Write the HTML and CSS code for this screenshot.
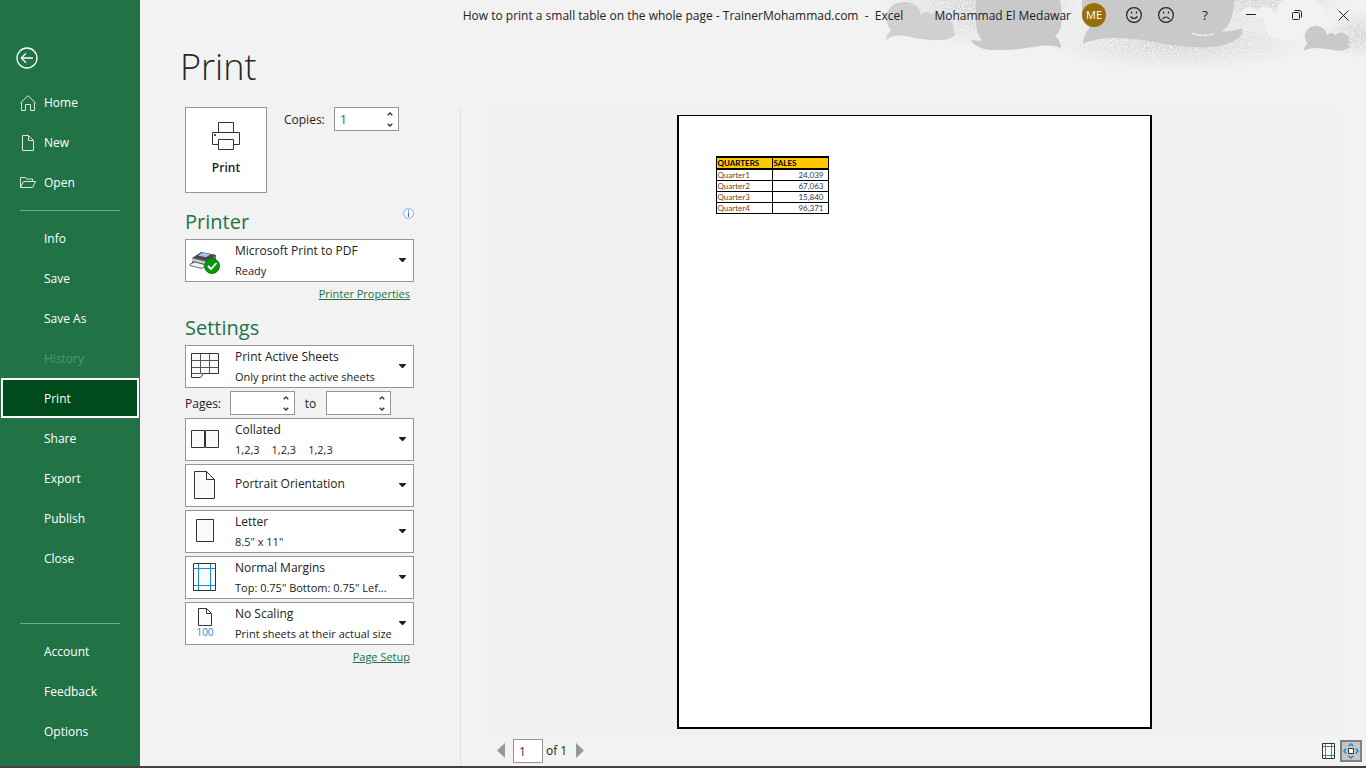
FILE: index.html
```html
<!DOCTYPE html>
<html lang="en">
<head>
<meta charset="utf-8">
<title>Print - Excel</title>
<link rel="stylesheet" href="styles.css">
</head>
<body>
<svg class="symbols" aria-hidden="true">
  <symbol id="caret" viewBox="0 0 7 4"><path d="M0 0h7v.8L4 4H3L0 .8z" fill="#222"/></symbol>
  <symbol id="up" viewBox="0 0 6 4"><path d="M.7 3.300 3 1l2.300 2.300" fill="none" stroke="#333" stroke-width="1.300"/></symbol>
  <symbol id="down" viewBox="0 0 6 4"><path d="M.7 .7 3 3 5.300 .7" fill="none" stroke="#333" stroke-width="1.300"/></symbol>
</svg>

<div class="app">
  <nav class="sidebar" aria-label="File">
    <button class="back" aria-label="Back">
      <svg width="22" height="22" viewBox="0 0 22 22" fill="none" stroke="#fff" stroke-width="1.300"><circle cx="11" cy="11" r="10"/><path d="M17 11H5.500M10 6.300 5.300 11 10 15.700"/></svg>
    </button>
    <a class="nav-item" href="#home"><svg width="16" height="16" viewBox="0 0 16 16" fill="none" stroke="#dce9e1"><path d="M.5 8 8 .7 15.500 8M1.500 7.500v8h4v-6h5v6h4v-8"/></svg>Home</a>
    <a class="nav-item" href="#new"><svg width="16" height="16" viewBox="0 0 16 16" fill="none" stroke="#dce9e1"><path d="M2.500.5h6l5 5v10h-11zM8.500.5v5h5"/></svg>New</a>
    <a class="nav-item" href="#open"><svg width="16" height="16" viewBox="0 0 16 16" fill="none" stroke="#dce9e1"><path d="M.5 12.500v-10h5l1 1.500h6v2.500M.5 12.500l3-6h12l-3 6z"/></svg>Open</a>
    <hr class="rule">
    <a class="nav-item" href="#info">Info</a>
    <a class="nav-item" href="#save">Save</a>
    <a class="nav-item" href="#saveas">Save As</a>
    <a class="nav-item disabled" aria-disabled="true">History</a>
    <a class="nav-item current" href="#print" aria-current="page">Print</a>
    <a class="nav-item" href="#share">Share</a>
    <a class="nav-item" href="#export">Export</a>
    <a class="nav-item" href="#publish">Publish</a>
    <a class="nav-item" href="#close">Close</a>
    <hr class="rule lower">
    <a class="nav-item" href="#account">Account</a>
    <a class="nav-item" href="#feedback">Feedback</a>
    <a class="nav-item" href="#options">Options</a>
  </nav>

  <section class="settings">
    <h1>Print</h1>
    <div class="print-row">
      <button class="print-button">
        <svg width="28" height="28" viewBox="0 0 28 28" fill="#fafafa" stroke="#333"><path d="M6.500 10.500v-10h15v10M6.500 22.500h-6v-12h27v12h-6"/><path d="M6.500 17.500h15v10h-15z"/><path d="M2.500 12.500h1v1h-1z" fill="#333"/></svg>
        Print
      </button>
      <label for="copies">Copies:</label>
      <div class="spin"><input id="copies" type="number" value="1"><span class="steps"><button aria-label="More copies"><svg><use href="#up"/></svg></button><button aria-label="Fewer copies"><svg><use href="#down"/></svg></button></span></div>
    </div>

    <div class="heading"><h2>Printer</h2>
      <button class="info" aria-label="Printer status"><svg width="11" height="11" viewBox="0 0 11 11"><circle cx="5.500" cy="5.500" r="5" fill="#f5f9ff" stroke="#87aede"/><path d="M5.500 2v1.500M5.500 4.500V9" stroke="#3c6eb4"/></svg></button>
    </div>
    <div class="choice">
      <select aria-label="Printer"><option>Microsoft Print to PDF</option></select>
      <span class="picture"><svg width="32" height="28" viewBox="0 0 32 28"><path d="m3 12 9-5.500 15 2.500v8l-9 5-15-4z" fill="#6b6d70"/><path d="m4 11.500 8.500-5.500L27 9l-8 6z" fill="#48494c"/><path d="m9 9.500 4.500-2.800 8 1.500-4.500 3z" fill="#a7c6ea"/><path d="m3 12.500 15 3.500v2.500L3 15z" fill="#c9cbce"/><path d="m1 18 5-2 11 3-4 3.500L1 19.500z" fill="#f2f2f2" stroke="#4a4a4a" stroke-width=".8"/><circle cx="23" cy="20" r="7.500" fill="#0a970e" stroke="#087a0b"/><path d="m19 20 3 3 5.500-6" fill="none" stroke="#fff" stroke-width="1.800"/></svg></span>
      <span class="detail">Ready</span><svg class="caret"><use href="#caret"/></svg>
    </div>
    <a class="link" href="#properties">Printer Properties</a>

    <div class="heading"><h2>Settings</h2></div>
    <div class="stack">
      <div class="choice">
        <select aria-label="What to print"><option>Print Active Sheets</option></select>
        <span class="picture"><svg width="28" height="26" viewBox="0 0 28 26"><path d="M.5.500h27v20h-15l-3 4h-9z" fill="#fafafa" stroke="#333"/><path d="M9.500.500v20M18.500.500v20M.5 7.500h27M.5 14.500h27M.5 20.500h12" fill="none" stroke="#555"/></svg></span>
        <span class="detail">Only print the active sheets</span><svg class="caret"><use href="#caret"/></svg>
      </div>
      <div class="pages">
        <label for="from">Pages:</label>
        <div class="spin"><input id="from" type="number"><span class="steps"><button aria-label="Raise first page"><svg><use href="#up"/></svg></button><button aria-label="Lower first page"><svg><use href="#down"/></svg></button></span></div>
        <label for="to">to</label>
        <div class="spin"><input id="to" type="number"><span class="steps"><button aria-label="Raise last page"><svg><use href="#up"/></svg></button><button aria-label="Lower last page"><svg><use href="#down"/></svg></button></span></div>
      </div>
      <div class="choice">
        <select aria-label="Collation"><option>Collated</option></select>
        <span class="picture"><svg width="28" height="18" viewBox="0 0 28 18" fill="#fafafa" stroke="#333"><path d="M.5.500h13v17H.5zM14.500.500h13v17h-13z"/></svg></span>
        <span class="detail groups"><span>1,2,3</span><span>1,2,3</span><span>1,2,3</span></span><svg class="caret"><use href="#caret"/></svg>
      </div>
      <div class="choice single">
        <select aria-label="Orientation"><option>Portrait Orientation</option></select>
        <span class="picture"><svg width="22" height="28" viewBox="0 0 22 28" fill="#fafafa" stroke="#333"><path d="M.5.500h12l8 8v19H.5zM12.500.500v8h8"/></svg></span>
        <svg class="caret"><use href="#caret"/></svg>
      </div>
      <div class="choice">
        <select aria-label="Paper size"><option>Letter</option></select>
        <span class="picture"><svg width="18" height="24" viewBox="0 0 18 24"><path d="M.5.500h17v22H.5z" fill="#fafafa" stroke="#333"/></svg></span>
        <span class="detail">8.5" x 11"</span><svg class="caret"><use href="#caret"/></svg>
      </div>
      <div class="choice">
        <select aria-label="Margins"><option>Normal Margins</option></select>
        <span class="picture"><svg width="24" height="28" viewBox="0 0 24 28"><path d="M.5.500h22v27H.5z" fill="#fafafa"/><path d="M5.500 1v26M17.500 1v26M1 5.500h21M1 22.500h21" stroke="#1e8bcd"/><path d="M.5.500h22v27H.5z" fill="none" stroke="#333"/></svg></span>
        <span class="detail">Top: 0.75" Bottom: 0.75" Lef...</span><svg class="caret"><use href="#caret"/></svg>
      </div>
      <div class="choice">
        <select aria-label="Scaling"><option>No Scaling</option></select>
        <span class="picture scaling"><svg width="14" height="18" viewBox="0 0 14 18" fill="#fafafa" stroke="#333"><path d="M.5.500h8l5 5v12H.5zM8.500.500v5h5"/></svg><span>100</span></span>
        <span class="detail">Print sheets at their actual size</span><svg class="caret"><use href="#caret"/></svg>
      </div>
    </div>
    <a class="link" href="#setup">Page Setup</a>
  </section>

  <main class="preview">
    <div class="desk">
      <div class="sheet">
        <table>
          <thead><tr><th>QUARTERS</th><th>SALES</th></tr></thead>
          <tbody>
            <tr><td>Quarter1</td><td>24,039</td></tr>
            <tr><td>Quarter2</td><td>67,063</td></tr>
            <tr><td>Quarter3</td><td>15,840</td></tr>
            <tr><td>Quarter4</td><td>96,371</td></tr>
          </tbody>
        </table>
      </div>
    </div>
    <div class="pager">
      <button aria-label="Previous page"><svg width="8" height="15" viewBox="0 0 8 15"><path d="M8 0v15L0 7.500z" fill="#969696"/></svg></button>
      <input id="page" type="text" value="1" aria-label="Current page"><label for="page">of 1</label>
      <button aria-label="Next page"><svg width="8" height="15" viewBox="0 0 8 15"><path d="M0 0v15l8-7.500z" fill="#969696"/></svg></button>
      <button class="view first" aria-label="Show margins"><svg width="14" height="16" viewBox="0 0 14 16"><path d="M.5.500h12v15H.5z" fill="#fff"/><path d="M3.500 1v14M9.500 1v14M1 3.500h11M1 12.500h11" stroke="#1e8bcd"/><path d="M.5.500h12v15H.5z" fill="none" stroke="#333"/></svg></button>
      <button class="view pressed" aria-label="Zoom to page" aria-pressed="true"><svg width="16" height="16" viewBox="0 0 16 16" fill="none"><path d="M5.500 3.200 8 1l2.500 2.200M5.500 12.800 8 15l2.500-2.200M3.200 5.500 1 8l2.200 2.500M12.800 5.500 15 8l-2.200 2.500" stroke="#1e8bcd" stroke-width="1.500"/><path d="M5.500 5.500h5v5h-5z" fill="#fff" stroke="#333"/></svg></button>
    </div>
  </main>

  <header class="titlebar">
    <svg class="clouds" viewBox="0 0 1518 240" aria-hidden="true">
      <defs>
        <filter id="grain" x="0" y="0" width="1" height="1" color-interpolation-filters="sRGB"><feTurbulence type="fractalNoise" baseFrequency=".3" numOctaves="2" seed="4"/><feColorMatrix values="0 0 0 0 .79  0 0 0 0 .79  0 0 0 0 .79  4 0 0 0 -1.400"/><feComposite operator="in" in2="SourceGraphic"/></filter>
        <radialGradient id="haze"><stop offset="0" stop-color="#000" stop-opacity=".9"/><stop offset=".5" stop-color="#000" stop-opacity=".5"/><stop offset="1" stop-color="#000" stop-opacity="0"/></radialGradient>
      </defs>
      <g filter="url(#grain)">
        <path d="M0 0h1518v212H0z" fill="none"/>
        <ellipse cx="390" cy="20" rx="330" ry="120" fill="url(#haze)"/>
        <ellipse cx="960" cy="125" rx="400" ry="86" fill="url(#haze)"/>
        <ellipse cx="1200" cy="0" rx="270" ry="90" fill="url(#haze)"/>
        <ellipse cx="1500" cy="105" rx="110" ry="72" fill="url(#haze)"/>
      </g>
      <path d="M1140 40q20-30 50-10 25-20 50 0l8 15q0-30 25-45h95q30 25 25 75-45 40-120 45-60-5-60-65l-40-5z" fill="#f2f2f2"/>
      <path d="M78 120q2-18 16-30-14-10-14-38 4-45 52-47 48 4 50 38 18-14 33 0 20-12 45 10 28 15 20 47l10-3q-10 23-60 24-53-2-90-12-36-8-62 11z" fill="#d0d0d0"/>
      <path d="M348 0h252q8 45 3 80-3 16-18 27 18 14 18 39-24-16-88-4-60 10-125 8-50-7-58-33 10 8 34 4-18-20-18-58z" fill="#c9c9c9"/>
      <path d="M666 0h456q0 70-37 94 35 2 60-10 8 15-10 31-40 29-120 27-80-4-130-16-150-26-217 5 4-32 22-48-24-14-24-45z" fill="#c9c9c9"/>
      <path d="M996 100q34 12 68 0" fill="none" stroke="#efefef" stroke-width="5" stroke-dasharray="14 3"/>
      <path d="M1332 153q1-15 11-23-11-14-8-29 8-23 32-24 29 2 35 29 12-14 24 0 6-8 16-8 27 3 26 26l-4 14 10-1q-12 15-43 15-45-8-64-8-22 0-35 9z" fill="#c9c9c9"/>
    </svg>
    <div class="title">How to print a small table on the whole page - TrainerMohammad.com&nbsp; -&nbsp; Excel</div>
    <div class="account">
      <span class="user">Mohammad El Medawar</span><span class="avatar">ME</span>
      <button class="face" aria-label="Send a smile"><svg width="16" height="16" viewBox="0 0 16 16" fill="none" stroke="#222" stroke-width="1.200"><circle cx="8" cy="8" r="7.400"/><path d="M4.500 9.500q3.500 4 7 0M5.500 4.500v2M10.500 4.500v2"/></svg></button>
      <button class="face" aria-label="Send a frown"><svg width="16" height="16" viewBox="0 0 16 16" fill="none" stroke="#222" stroke-width="1.200"><circle cx="8" cy="8" r="7.400"/><path d="M4.500 12q3.500-4 7 0M5.500 4.500v2M10.500 4.500v2"/></svg></button>
      <button class="face help" aria-label="Help">?</button>
      <button class="window" aria-label="Minimize"><svg width="10" height="10" viewBox="0 0 10 10"><path d="M0 4.500h10" stroke="#222"/></svg></button>
      <button class="window" aria-label="Restore"><svg width="10" height="10" viewBox="0 0 10 10" fill="none" stroke="#222"><rect x=".5" y="2.500" width="7" height="7" rx="1"/><path d="M2.500.500h5q2 0 2 2v5"/></svg></button>
      <button class="window" aria-label="Close"><svg width="11" height="11" viewBox="0 0 11 11"><path d="m.5.500 10 10m0-10-10 10" stroke="#222"/></svg></button>
    </div>
  </header>
</div>
</body>
</html>
```
FILE: styles.css
```css
* { box-sizing: border-box; }
body { margin: 0; font: 12px/20px "Open Sans", "Noto Sans", sans-serif; color: #222; background: #f2f2f2; }
button, input, select { font: inherit; color: inherit; margin: 0; }
button { padding: 0; border: 0; background: none; display: flex; align-items: center; justify-content: center; }
h1, h2 { margin: 0; font-weight: 300; }
svg { display: block; flex: none; }
.symbols { position: absolute; width: 0; height: 0; }

.app {
  min-height: 100vh;
  display: grid;
  grid-template: 30px 1fr / 140px 320px 1fr;
  border-bottom: 2px solid #444142;
}

.titlebar {
  grid-area: 1 / 1 / 2 / 4;
  display: grid;
  grid-template-columns: 1fr auto 1fr;
  align-items: center;
  position: relative;
}
.clouds { position: absolute; top: 0; right: 0; width: 506px; height: 80px; }
.title, .account { position: relative; white-space: nowrap; }
.title { grid-column: 2; padding-top: 2px; }
.account { grid-column: 3; display: flex; align-items: center; justify-content: flex-end; }
.user { padding-top: 2px; }
.avatar { width: 24px; height: 24px; border-radius: 50%; background: #986f0b; color: #fff; line-height: 24px; text-align: center; margin: 0 12px 0 11px; font-size: 11px; }
.face { width: 32px; height: 30px; }
.help { margin: 0 7px; font-size: 13px; }
.window { width: 46px; height: 30px; }

.sidebar { grid-area: 1 / 1 / 3 / 2; background: #217346; display: flex; flex-direction: column; padding: 42px 0 15px; }
.back { width: 32px; height: 32px; margin: 0 0 8px 11px; }
.nav-item { height: 40px; flex: none; display: flex; align-items: center; gap: 8px; padding: 1px 0 0 44px; color: #fff; text-decoration: none; }
.nav-item:has(svg) { padding-left: 20px; }
.disabled { color: #4f9770; }
.current { margin: 0 1px; padding-left: 41px; border: 2px solid #fff; background: #004b1c; }
.rule { width: 100px; height: 1px; flex: none; border: 0; background: #6fb08b; margin: 8px 20px 7px; }
.lower { margin-top: auto; }

.settings { grid-area: 2 / 2; padding: 0 46px 0 45px; }
h1 { font-size: 36px; line-height: 74px; margin: 0 0 3px -5px; color: #262626; }
h2 { font-size: 20px; line-height: 28px; font-weight: 400; color: #217346; }
.print-row { display: flex; align-items: flex-start; height: 86px; line-height: 26px; }
.print-button { width: 82px; height: 86px; margin-right: 17px; border: 1px solid #969696; background: #fff; flex-direction: column; gap: 8px; font-weight: 600; line-height: 20px; }
.print-row label { width: 50px; }
.spin { width: 65px; height: 24px; display: flex; border: 1px solid #969696; background: #fff; }
.spin input { width: 47px; border: 0; background: none; padding: 1px 5px 0; outline: 0; appearance: textfield; color: #217346; }
.spin input::-webkit-inner-spin-button { appearance: none; margin: 0; }
.steps { width: 16px; display: flex; flex-direction: column; }
.steps button { flex: 1; }
.steps svg { width: 6px; height: 4px; }
.heading { display: flex; justify-content: space-between; padding: 15px 0 3px; }
.info { width: 11px; height: 11px; }

.stack { display: grid; gap: 3px; }
.choice { display: grid; grid-template: 22px 19px / 49px 1fr 20px; border: 1px solid #969696; background: #fff; }
.choice select { grid-area: 1 / 1 / 3 / 4; appearance: none; min-width: 0; border: 0; background: none; padding: 1px 20px 20px 49px; line-height: 20px; outline: 0; }
.picture, .detail, .caret { pointer-events: none; }
.picture { grid-area: 1 / 1 / 3 / 2; width: 38px; padding-bottom: 1px; display: flex; flex-direction: column; align-items: center; justify-content: center; }
.detail { grid-area: 2 / 2 / 3 / 4; font-size: 11px; line-height: 18px; white-space: nowrap; }
.groups { display: flex; gap: 12px; }
.caret { grid-area: 1 / 3 / 3 / 4; width: 7px; height: 4px; margin: 18px 0 0 6px; }
.single select { padding: 9px 20px 12px 49px; }
.scaling { font-size: 10px; line-height: 12px; color: #1e8bcd; }
.link { display: block; width: fit-content; margin: 2px 4px 0 auto; font-size: 11px; color: #217346; }
.link + .heading { padding-top: 10px; }
.pages { display: flex; height: 24px; line-height: 26px; }
.pages label:first-child { width: 45px; }
.pages label { width: 31px; }
.pages label:nth-of-type(2) { text-align: center; }

.preview { grid-area: 2 / 3; margin-top: 77px; padding: 1px 0 0 30px; border-left: 1px solid #dfdfdf; display: flex; flex-direction: column; }
.desk { flex: 1; margin-right: 29px; padding: 7px 0 6px; background: #f0f0f0; display: flex; justify-content: center; }
.sheet { aspect-ratio: 475 / 614; background: #fff; border: 2px solid #000; border-top-width: 1px; padding: 40px 37px; }
table { width: 113px; border-collapse: collapse; table-layout: fixed; border: 1px solid #000; font: 8px/10px Lato, sans-serif; color: #1f3864; }
th, td { border: 1px solid #000; padding: 0 4px 0 1px; height: 11px; text-align: left; }
th { background: #ffc800; color: #000; border-width: 2px 1px; }
td:last-child { text-align: right; }
td:first-child { color: #6b4423; }
.pager { display: flex; align-items: center; height: 31px; padding-right: 4px; }
.pager button { width: 20px; height: 24px; }
.pager input { width: 30px; height: 24px; border: 1px solid #969696; background: #fff; padding: 1px 5px 0; margin: 0 3px 0 2px; color: #5b2150; }
.pager label { padding-top: 1px; margin-right: 3px; }
.pager .view { width: 22px; height: 22px; }
.pager .first { margin: 0 0 0 auto; }
.pager .pressed { border: 2px solid #808080; background: #c6c6c6; }
```
